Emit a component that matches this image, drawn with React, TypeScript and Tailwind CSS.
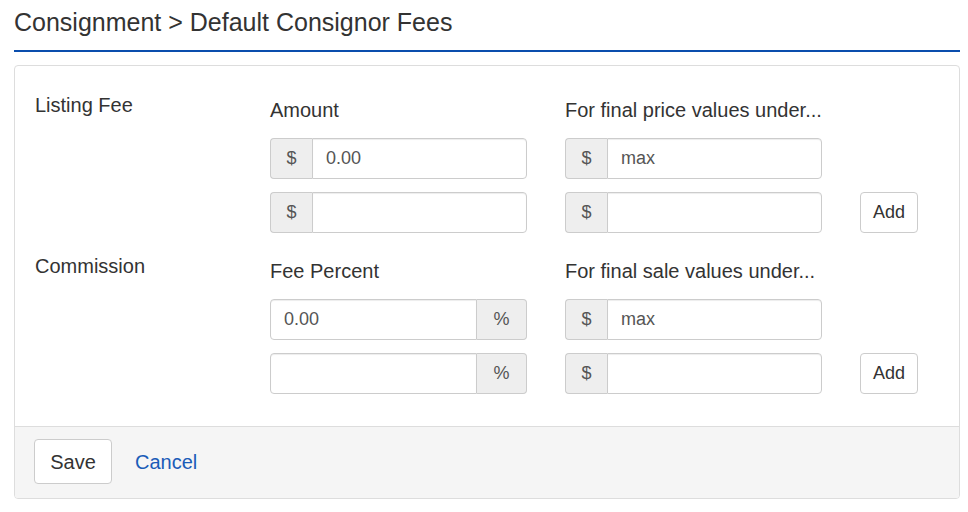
import React from "react";

const font = { fontFamily: '"Liberation Sans", Arial, sans-serif' };

const Addon = ({ children, side }: { children: React.ReactNode; side: "left" | "right" }) => (
  <span
    className={`flex items-center justify-center bg-[#eeeeee] text-[#555] text-[18px] border border-[#cccccc] ${
      side === "left" ? "w-[42px] rounded-l-[4px] border-r-0" : "w-[50px] rounded-r-[4px] border-l-0"
    }`}
  >
    {children}
  </span>
);

const MoneyInput = ({ value }: { value?: string }) => (
  <div className="flex h-[41px] w-[257px]">
    <Addon side="left">$</Addon>
    <input
      readOnly
      value={value ?? ""}
      className="flex-1 min-w-0 border border-[#cccccc] rounded-r-[4px] px-[13px] text-[18px] text-[#555] outline-none shadow-[inset_0_1px_1px_rgba(0,0,0,0.075)]"
      style={font}
    />
  </div>
);

const PercentInput = ({ value }: { value?: string }) => (
  <div className="flex h-[41px] w-[257px]">
    <input
      readOnly
      value={value ?? ""}
      className="flex-1 min-w-0 border border-[#cccccc] rounded-l-[4px] px-[13px] text-[18px] text-[#555] outline-none shadow-[inset_0_1px_1px_rgba(0,0,0,0.075)]"
      style={font}
    />
    <Addon side="right">%</Addon>
  </div>
);

const AddButton = () => (
  <button
    className="h-[41px] w-[58px] bg-white border border-[#cccccc] rounded-[4px] text-[18px] text-[#333]"
    style={font}
  >
    Add
  </button>
);

const Section = ({
  title,
  leftLabel,
  rightLabel,
  percent,
  valueRow,
}: {
  title: string;
  leftLabel: string;
  rightLabel: string;
  percent?: boolean;
  valueRow: string;
}) => (
  <div className="grid grid-cols-[235px_295px_295px_auto]">
    <div className="leading-[28px] pt-px">{title}</div>
    <div className="pt-[6px] flex flex-col gap-[13px]">
      <div className="leading-[28px] mb-px">{leftLabel}</div>
      {percent ? <PercentInput value={valueRow} /> : <MoneyInput value={valueRow} />}
      {percent ? <PercentInput /> : <MoneyInput />}
    </div>
    <div className="pt-[6px] flex flex-col gap-[13px]">
      <div className="leading-[28px] mb-px">{rightLabel}</div>
      <MoneyInput value="max" />
      <MoneyInput />
    </div>
    <div className="pt-[6px] flex flex-col gap-[13px]">
      <div className="h-[28px] mb-px" />
      <div className="h-[41px]" />
      <AddButton />
    </div>
  </div>
);

export default function App() {
  return (
    <div className="w-[968px] h-[512px] bg-white text-[#333] text-[20px]" style={font}>
      <div className="ml-[14px] w-[946px]">
        <h1 className="pt-[8px] pb-[14px] text-[25px] leading-[28px] font-normal border-b-2 border-[#0a4ead]">
          Consignment &gt; Default Consignor Fees
        </h1>
        <div className="mt-[13px] border border-[#dddddd] rounded-[4px] overflow-hidden">
          <div className="pt-[24px] pb-[32px] pl-[20px] flex flex-col gap-[18px]">
            <Section
              title="Listing Fee"
              leftLabel="Amount"
              rightLabel="For final price values under..."
              valueRow="0.00"
            />
            <Section
              title="Commission"
              leftLabel="Fee Percent"
              rightLabel="For final sale values under..."
              valueRow="0.00"
              percent
            />
          </div>
          <div className="bg-[#f5f5f5] border-t border-[#dddddd] pl-[19px] pt-[12px] pb-[14px] flex items-center gap-[23px]">
            <button
              className="h-[45px] w-[78px] bg-white border border-[#cccccc] rounded-[4px] text-[20px] text-[#333]"
              style={font}
            >
              Save
            </button>
            <a className="text-[#1a5cb8] text-[20px] cursor-pointer">Cancel</a>
          </div>
        </div>
      </div>
    </div>
  );
}
